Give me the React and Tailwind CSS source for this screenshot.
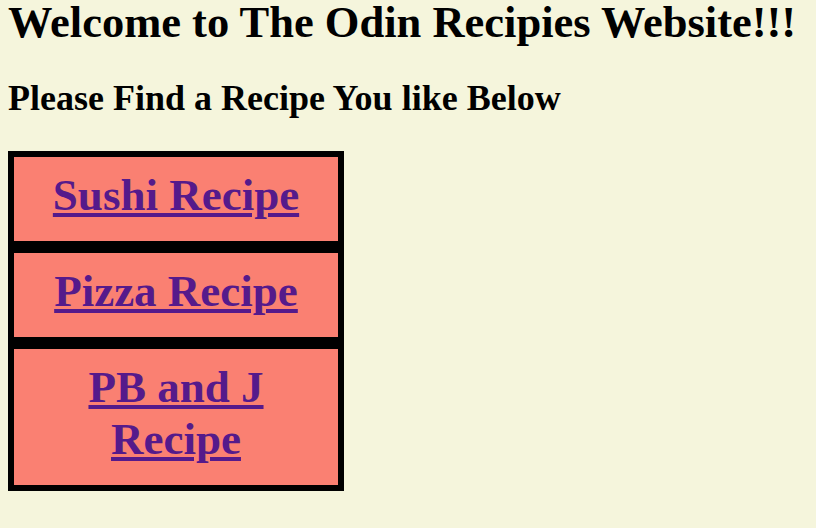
import React from 'react';

const recipes = [
  { name: 'Sushi Recipe', href: '#sushi' },
  { name: 'Pizza Recipe', href: '#pizza' },
  { name: 'PB and J Recipe', href: '#pbj' },
];

const App = () => {
  return (
    <div className="min-h-screen bg-[#f5f5dc] px-2 text-black font-['Liberation_Serif',serif]">
      <h1 className="m-0 text-[44.5px] leading-[45px] font-bold">
        Welcome to The Odin Recipies Website!!!
      </h1>
      <h2 className="mt-[33px] text-[36px] leading-[41px] font-bold">
        Please Find a Recipe You like Below
      </h2>

      {/* Recipe list */}
      <ul className="mt-[32px] w-[336px]">
        {recipes.map((recipe) => (
          <li
            key={recipe.name}
            className="border-[6px] border-black bg-[#fa8072] px-4 pt-3 pb-5 text-center"
          >
            <a
              href={recipe.href}
              className="text-[45px] leading-[52px] font-bold text-[#551a8b] underline"
            >
              {recipe.name}
            </a>
          </li>
        ))}
      </ul>
    </div>
  );
};

export default App;
